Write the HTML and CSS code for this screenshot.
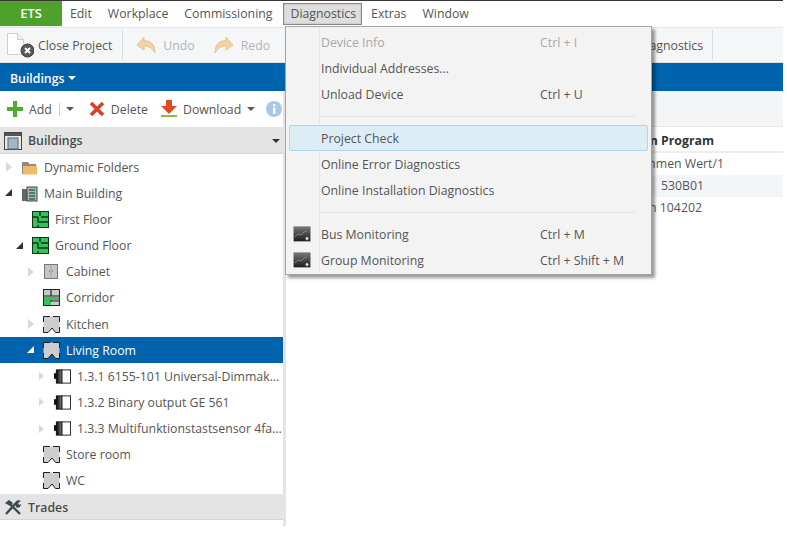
FILE: index.html
```html
<!DOCTYPE html>
<html lang="en">
<head>
    <meta charset="UTF-8">
    <meta name="viewport" content="width=device-width, initial-scale=1.0">
    <title>ETS</title>
    <link rel="stylesheet" href="styles.css">
</head>
<body>

    <!-- Shared icons -->
    <svg class="defs" width="0" height="0">
        <symbol id="i-floor" viewBox="0 0 17 17">
            <rect x="0.5" y="0.5" width="16" height="16" fill="#35c05a" stroke="#16301e"/>
            <path d="M8 1v4M1 6h5M9 6h7M6 6v5h10M6 14v2" fill="none" stroke="#12301c" stroke-width="1.4"/>
        </symbol>
        <symbol id="i-corridor" viewBox="0 0 17 17">
            <rect x="0.5" y="0.5" width="16" height="16" fill="#c9c9c9" stroke="#222"/>
            <rect x="1" y="8" width="15" height="3" fill="#35c05a"/>
            <rect x="1" y="9" width="7" height="7" fill="#35c05a"/>
            <path d="M8 1v6M1 7h15M8 11v1h8" fill="none" stroke="#222" stroke-width="1.2"/>
        </symbol>
        <symbol id="i-room" viewBox="0 0 17 17">
            <path d="M.5.5h16v16h-4L9 12l-4 4.500H.5z" fill="#cdcdcd"/>
            <path d="M7 .5H.5V6M10 .5h6.500V6M.5 11v5.500H5L9 12l3.500 4.500h4V11" fill="none" stroke="#1e1e1e" stroke-width="1"/>
        </symbol>
        <symbol id="i-device" viewBox="0 0 18 17">
            <defs>
                <linearGradient id="g-dev" x1="0" x2="1" y1="0" y2="0">
                    <stop offset="0" stop-color="#000"/>
                    <stop offset="1" stop-color="#888"/>
                </linearGradient>
            </defs>
            <rect x="0" y="5" width="3" height="6" fill="#111"/>
            <rect x="2.500" y="1.500" width="6" height="14" fill="url(#g-dev)" stroke="#111"/>
            <rect x="8.500" y="1.500" width="9" height="14" fill="#fff" stroke="#222"/>
        </symbol>
        <symbol id="i-monitor" viewBox="0 0 18 16">
            <defs>
                <linearGradient id="g-mon" x1="0" x2="0" y1="0" y2="1">
                    <stop offset="0" stop-color="#777"/>
                    <stop offset="1" stop-color="#1c1c1c"/>
                </linearGradient>
            </defs>
            <rect x="0.500" y="0.500" width="17" height="15" rx="1" fill="url(#g-mon)" stroke="#a5a5a5"/>
            <path d="M2 11l3-3 3 1 3-3 3-1" fill="none" stroke="#5b9a57" stroke-width="1"/>
            <circle cx="14" cy="12.500" r="2" fill="#ddd" stroke="#333"/>
        </symbol>
    </svg>

    <div class="app">
        <nav class="menubar">
            <div class="brand">ETS</div>
            <span class="menu-item">Edit</span>
            <span class="menu-item">Workplace</span>
            <span class="menu-item">Commissioning</span>
            <span class="menu-item menu-open">Diagnostics</span>
            <span class="menu-item">Extras</span>
            <span class="menu-item">Window</span>
        </nav>

        <div class="toolbar">
            <div class="tool tool-close">
                <svg class="tool-doc" width="27" height="25" viewBox="0 0 27 25">
                    <path d="M.5.5h10l6 6v15H.5z" fill="#fff" stroke="#cfcfcf"/>
                    <path d="M10.500.5v6h6" fill="#eee" stroke="#cfcfcf"/>
                    <circle cx="20.500" cy="17.500" r="6.500" fill="#595959" stroke="#3a3a3a"/>
                    <path d="M18 15l5 5M23 15l-5 5" stroke="#fff" stroke-width="1.800"/>
                </svg>
                <span>Close Project</span>
            </div>
            <div class="tool-sep"></div>
            <div class="tool disabled">
                <svg width="22" height="20" viewBox="0 0 22 20">
                    <path d="M2 10l7-8v4c6-1 11 3 11 12-3-5-6-7-11-7v4z" fill="#f2d3a3" stroke="#e8c48d"/>
                </svg>
                <span>Undo</span>
            </div>
            <div class="tool disabled">
                <svg width="22" height="20" viewBox="0 0 22 20">
                    <path d="M20 10l-7-8v4C7 5 2 9 2 18c3-5 6-7 11-7v4z" fill="#f2d3a3" stroke="#e8c48d"/>
                </svg>
                <span>Redo</span>
            </div>
            <div class="tool tool-online">
                <span>Online Diagnostics</span>
            </div>
            <div class="tool-sep tool-sep-last"></div>
        </div>

        <div class="blue-bar">Buildings <i class="caret caret-white"></i></div>

        <div class="work">
            <aside class="side">
                <div class="actions">
                    <svg width="16" height="16" viewBox="0 0 16 16"><path d="M6 0h4v6h6v4h-6v6H6v-6H0V6h6z" fill="#53a83c"/></svg>
                    <span>Add</span>
                    <span class="act-split"></span>
                    <i class="caret"></i>
                    <svg class="act-delete" width="16" height="16" viewBox="0 0 16 16"><path d="M2 2l12 12M14 2L2 14" stroke="#d8402a" stroke-width="3.600"/></svg>
                    <span>Delete</span>
                    <svg class="act-download" width="18" height="18" viewBox="0 0 18 18">
                        <path d="M6 0h6v6h5l-8 8-8-8h5z" fill="#dd4c25"/>
                        <rect x="1" y="15" width="16" height="2" fill="#8cbf3f"/>
                    </svg>
                    <span class="act-download-text">Download</span>
                    <i class="caret"></i>
                    <svg class="act-info" width="16" height="16" viewBox="0 0 16 16">
                        <circle cx="8" cy="8" r="8" fill="#a9c8e6"/>
                        <rect x="7" y="6.500" width="2.400" height="6.500" fill="#fff"/>
                        <rect x="7" y="3" width="2.400" height="2.400" fill="#fff"/>
                    </svg>
                </div>

                <div class="pane-head">
                    <svg width="18" height="18" viewBox="0 0 18 18">
                        <rect x="0.500" y="0.500" width="17" height="17" fill="#e8e8e8" stroke="#444"/>
                        <rect x="1" y="1" width="16" height="3" fill="#555"/>
                        <rect x="4" y="6" width="10" height="11" fill="#9fb9c9" stroke="#666"/>
                    </svg>
                    <span>Buildings</span>
                    <i class="caret caret-dark"></i>
                </div>

                <ul class="tree">
                    <li class="node lvl-0">
                        <i class="arrow"></i>
                        <svg class="node-icon" viewBox="0 0 17 17">
                            <path d="M1 3h6l1.500 2H15v10H1z" fill="#8b8b8b"/>
                            <path d="M2 7h14v8.500H2z" fill="#f0bb68"/>
                        </svg>
                        Dynamic Folders
                    </li>
                    <li class="node lvl-0">
                        <i class="arrow open"></i>
                        <svg class="node-icon" viewBox="0 0 17 17">
                            <rect x="1" y="4" width="7" height="12" fill="#666"/>
                            <rect x="6" y="2" width="10" height="14" fill="#aab5b0" stroke="#444"/>
                            <path d="M8 5h6M8 8h6M8 11h6M8 14h6" stroke="#2f6b4c" stroke-width="1.300"/>
                        </svg>
                        Main Building
                    </li>
                    <li class="node lvl-1">
                        <i class="arrow none"></i>
                        <svg class="node-icon"><use href="#i-floor"/></svg>
                        First Floor
                    </li>
                    <li class="node lvl-1">
                        <i class="arrow open"></i>
                        <svg class="node-icon"><use href="#i-floor"/></svg>
                        Ground Floor
                    </li>
                    <li class="node lvl-2">
                        <i class="arrow"></i>
                        <svg class="node-icon" viewBox="0 0 17 17">
                            <rect x="1.500" y="1.500" width="13" height="14" fill="#c4c4c4" stroke="#777"/>
                            <path d="M8 2v13" stroke="#a5a5a5"/>
                            <path d="M6 8h.8M9.200 8h.8" stroke="#444"/>
                        </svg>
                        Cabinet
                    </li>
                    <li class="node lvl-2">
                        <i class="arrow none"></i>
                        <svg class="node-icon"><use href="#i-corridor"/></svg>
                        Corridor
                    </li>
                    <li class="node lvl-2">
                        <i class="arrow"></i>
                        <svg class="node-icon"><use href="#i-room"/></svg>
                        Kitchen
                    </li>
                    <li class="node lvl-2 selected">
                        <i class="arrow open"></i>
                        <svg class="node-icon"><use href="#i-room"/></svg>
                        Living Room
                    </li>
                    <li class="node lvl-3">
                        <i class="arrow small"></i>
                        <svg class="node-icon"><use href="#i-device"/></svg>
                        1.3.1 6155-101 Universal-Dimmak...
                    </li>
                    <li class="node lvl-3">
                        <i class="arrow small"></i>
                        <svg class="node-icon"><use href="#i-device"/></svg>
                        1.3.2 Binary output GE 561
                    </li>
                    <li class="node lvl-3">
                        <i class="arrow small"></i>
                        <svg class="node-icon"><use href="#i-device"/></svg>
                        1.3.3 Multifunktionstastsensor 4fa...
                    </li>
                    <li class="node lvl-2">
                        <i class="arrow none"></i>
                        <svg class="node-icon"><use href="#i-room"/></svg>
                        Store room
                    </li>
                    <li class="node lvl-2">
                        <i class="arrow none"></i>
                        <svg class="node-icon"><use href="#i-room"/></svg>
                        WC
                    </li>
                </ul>

                <div class="pane-head pane-trades">
                    <svg width="18" height="16" viewBox="0 0 18 16">
                        <path d="M2 15L12 4M16 15L6 5" stroke="#3e4a4f" stroke-width="2.400"/>
                        <path d="M1 4l4-3 4 3-3 3zM11 5c0-3 3-5 6-3l-3 2 1 2 2-1c0 3-3 5-5 3z" fill="#3e4a4f"/>
                    </svg>
                    <span>Trades</span>
                </div>
            </aside>

            <div class="splitter"></div>

            <main class="content">
                <div class="content-bar"></div>
                <div class="col-head">Application Program</div>
                <div class="cell cell-first">Dimmen Wert/1</div>
                <div class="cell cell-alt">530B01</div>
                <div class="cell cell-last">Schalten 104202</div>
            </main>
        </div>
    </div>

    <!-- Diagnostics dropdown -->
    <div class="dropdown">
        <div class="drop-item disabled"><span class="drop-label">Device Info</span><span>Ctrl + I</span></div>
        <div class="drop-item"><span class="drop-label">Individual Addresses...</span></div>
        <div class="drop-item"><span class="drop-label">Unload Device</span><span>Ctrl + U</span></div>
        <div class="drop-sep"></div>
        <div class="drop-item hover"><span class="drop-label">Project Check</span></div>
        <div class="drop-item"><span class="drop-label">Online Error Diagnostics</span></div>
        <div class="drop-item"><span class="drop-label">Online Installation Diagnostics</span></div>
        <div class="drop-sep"></div>
        <div class="drop-item">
            <svg class="drop-icon"><use href="#i-monitor"/></svg>
            <span class="drop-label">Bus Monitoring</span><span>Ctrl + M</span>
        </div>
        <div class="drop-item">
            <svg class="drop-icon"><use href="#i-monitor"/></svg>
            <span class="drop-label">Group Monitoring</span><span>Ctrl + Shift + M</span>
        </div>
    </div>

</body>
</html>
```

FILE: styles.css
```css
* {
    box-sizing: border-box;
    margin: 0;
    padding: 0;
}

body {
    font-family: "Open Sans", "Noto Sans", sans-serif;
    font-size: 12.3px;
    color: #555;
    background: #fff;
    width: 787px;
    height: 536px;
    overflow: hidden;
    position: relative;
}

.defs {
    position: absolute;
}

.app {
    width: 783px;
    height: 526px;
    display: flex;
    flex-direction: column;
    border-top: 1px solid #3a3434;
}

/* Menu bar */
.menubar {
    height: 26px;
    display: flex;
    align-items: center;
    flex-shrink: 0;
}

.brand {
    width: 62px;
    height: 25px;
    margin-bottom: 1px;
    background: #4ea12a;
    color: #fff;
    font-size: 13px;
    font-weight: 600;
    text-align: center;
    line-height: 25px;
}

.menu-item {
    padding: 0 8px;
    line-height: 20px;
    white-space: nowrap;
}

.menu-open {
    margin-left: 3px;
    margin-right: 1px;
    padding: 0 5px 0 6px;
    background: #dedede;
    border: 1px solid #888;
    box-shadow: inset 0 0 2px #aaa;
}

/* Main toolbar */
.toolbar {
    height: 36px;
    display: flex;
    align-items: center;
    flex-shrink: 0;
    background: #f5f6f7;
    border-top: 1px solid #e6e6e6;
    border-bottom: 1px solid #ddd;
    padding: 0 70px 0 7px;
}

.tool {
    display: flex;
    align-items: center;
    gap: 6px;
    margin-right: 18px;
    white-space: nowrap;
}

.tool.disabled {
    color: #b5b5b5;
}

.tool-close {
    margin-right: 10px;
}

.tool-doc {
    margin-right: -2px;
}

.tool-sep {
    width: 1px;
    height: 30px;
    background: #dcdcdc;
    margin-right: 12px;
    flex-shrink: 0;
}

.tool-sep-last {
    margin-right: 0;
}

.tool-online {
    margin-left: auto;
    margin-right: 9px;
}

.blue-bar {
    height: 28px;
    flex-shrink: 0;
    background: #0063ad;
    color: #fff;
    font-weight: 600;
    padding: 2px 0 0 10px;
    display: flex;
    align-items: center;
    gap: 4px;
}

.caret {
    display: inline-block;
    width: 0;
    height: 0;
    border-left: 4px solid transparent;
    border-right: 4px solid transparent;
    border-top: 4px solid #555;
}

.caret-white {
    border-top-color: #fff;
}

.caret-dark {
    border-top-color: #333;
    margin-left: auto;
    margin-right: 3px;
}

/* Work area */
.work {
    flex: 1;
    display: flex;
    min-height: 0;
}

.side {
    width: 283px;
    display: flex;
    flex-direction: column;
}

.actions {
    height: 36px;
    display: flex;
    align-items: center;
    gap: 6px;
    padding-left: 7px;
    white-space: nowrap;
}

.act-split {
    width: 1px;
    height: 13px;
    background: #ccc;
    margin-left: 1px;
}

.act-delete {
    margin-left: 9px;
}

.act-download {
    margin-left: 6px;
}

.act-download-text {
    margin-left: -1px;
}

.act-info {
    margin-left: 5px;
}

.pane-head {
    height: 27px;
    display: flex;
    align-items: center;
    gap: 6px;
    padding: 1px 0 0 4px;
    background: #e4e4e4;
    border-bottom: 1px solid #d4d4d4;
    font-weight: 600;
    color: #4a4a4a;
    flex-shrink: 0;
}

.tree {
    list-style: none;
    flex-shrink: 0;
}

.node {
    height: 26.17px;
    display: flex;
    align-items: center;
    white-space: nowrap;
}

.lvl-0 { padding-left: 4px; }
.lvl-1 { padding-left: 15px; }
.lvl-2 { padding-left: 26px; }
.lvl-3 { padding-left: 37px; }

.arrow {
    width: 10px;
    height: 10px;
    margin-right: 7px;
    flex-shrink: 0;
    position: relative;
}

.arrow::before {
    content: "";
    position: absolute;
    left: 2px;
    top: 0;
    border-left: 6px solid #d8d8d8;
    border-top: 5px solid transparent;
    border-bottom: 5px solid transparent;
}

.arrow.small::before {
    border-left-width: 5px;
    border-top-width: 4px;
    border-bottom-width: 4px;
    top: 1px;
}

.arrow.open::before {
    left: 1px;
    top: 1px;
    border: 0;
    border-bottom: 7px solid #333;
    border-left: 7px solid transparent;
}

.arrow.none::before {
    display: none;
}

.node-icon {
    width: 17px;
    height: 17px;
    margin-right: 6px;
    flex-shrink: 0;
}

.selected {
    background: #0063ad;
    color: #fff;
}

.selected .arrow.open::before {
    border-bottom-color: #fff;
}

.pane-trades {
    height: 26px;
}

.splitter {
    width: 3px;
    background: #e4e4e4;
}

/* Right pane */
.content {
    flex: 1;
    min-width: 0;
}

.content-bar {
    height: 36px;
    background: #f4f5f7;
    border-bottom: 1px solid #e6e6e6;
}

.col-head {
    height: 26px;
    line-height: 27px;
    font-weight: 700;
    color: #333;
    text-align: right;
    padding-right: 69px;
    border-bottom: 2px solid #eee;
    white-space: nowrap;
}

.cell {
    height: 22px;
    line-height: 22px;
    text-align: right;
    white-space: nowrap;
}

.cell-first {
    padding-right: 59px;
}

.cell-alt {
    background: #f3f6f9;
    padding-right: 79px;
}

.cell-last {
    padding-right: 81px;
}

/* Dropdown */
.dropdown {
    position: absolute;
    left: 285px;
    top: 26px;
    width: 367px;
    height: 249px;
    padding-top: 2px;
    border: 1px solid #a3a3a3;
    background: linear-gradient(to right, #f3f3f3 33px, #e8e8e8 33px, #e8e8e8 34px, #f3f3f3 34px);
    box-shadow: 3px 3px 3px rgba(0, 0, 0, 0.4);
}

.drop-item {
    height: 26px;
    display: flex;
    align-items: center;
    padding-left: 35px;
    position: relative;
}

.drop-item.disabled {
    color: #a8a8a8;
}

.drop-label {
    width: 219px;
    flex-shrink: 0;
}

.drop-item.hover {
    margin: 0 3px;
    padding-left: 31px;
    background: #dcedf6;
    border: 1px solid #a9d8ee;
    border-radius: 2px;
}

.drop-sep {
    height: 1px;
    margin: 9px 16px 8px 35px;
    background: #e2e2e2;
}

.drop-icon {
    position: absolute;
    left: 7px;
    top: 5px;
    width: 18px;
    height: 16px;
}
```
